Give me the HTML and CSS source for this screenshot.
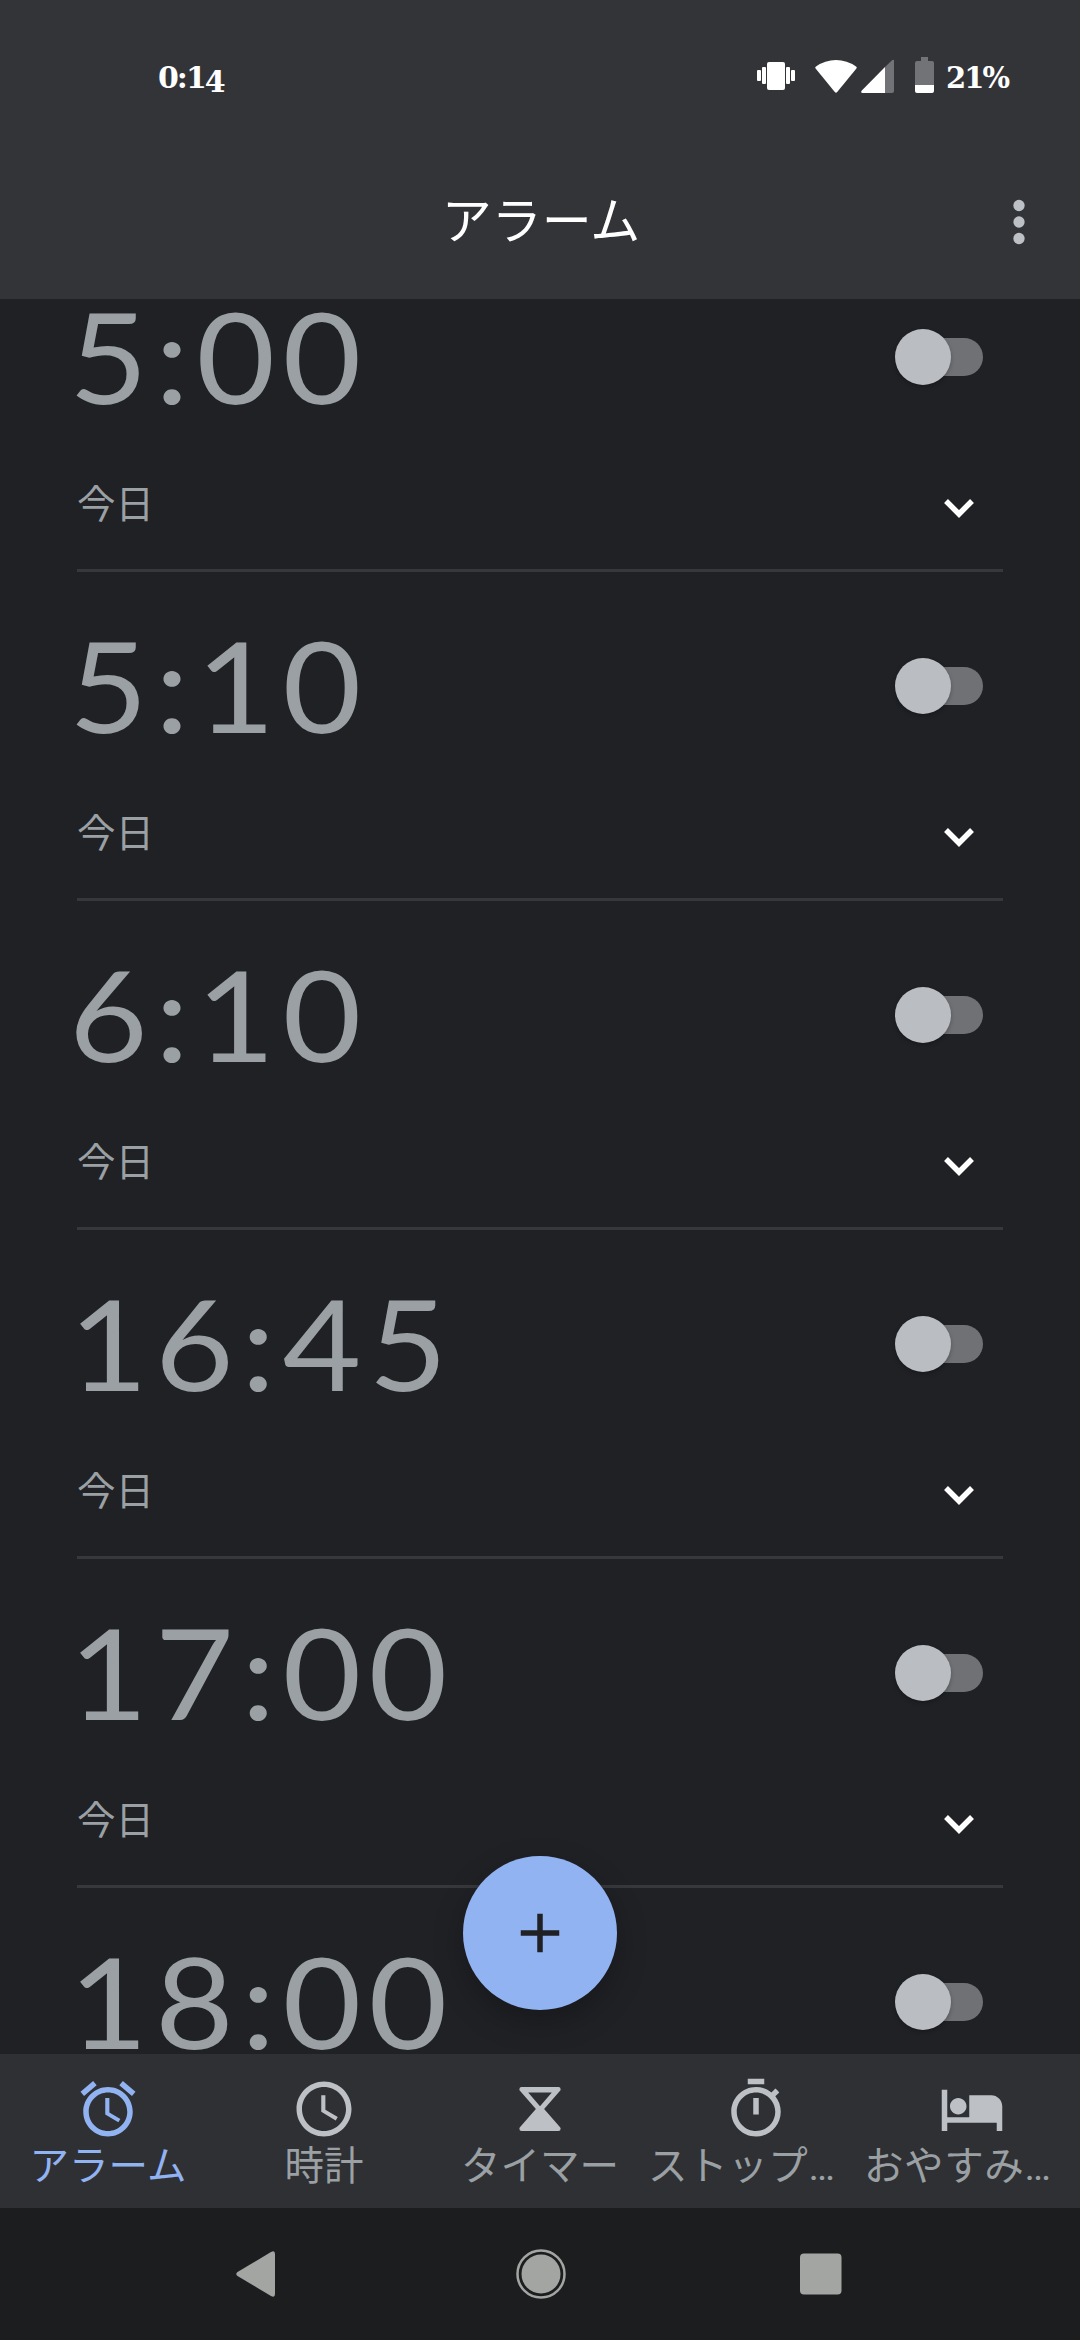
FILE: index.html
```html
<!DOCTYPE html>
<html lang="ja">
<head>
<meta charset="UTF-8">
<meta name="viewport" content="width=device-width, initial-scale=1.0">
<title>アラーム</title>
<link rel="stylesheet" href="styles.css">
</head>
<body>

<div class="screen">
    <header class="header">
        <div class="status-bar">
            <span class="status-time">0:1<span class="low">4</span></span>
            <div class="status-icons">
                <svg class="vibrate" width="38" height="40" viewBox="0 0 38 40">
                    <rect x="0" y="14" width="4" height="11" rx="1"/>
                    <rect x="5" y="11" width="4" height="17" rx="1"/>
                    <rect x="10" y="6" width="18" height="28" rx="2"/>
                    <rect x="29" y="11" width="4" height="17" rx="1"/>
                    <rect x="34" y="14" width="4" height="11" rx="1"/>
                </svg>
                <svg class="wifi" width="42" height="40" viewBox="0 0 42 40">
                    <path d="M.6 12.6Q-.2 11.4 1 10.5Q10 4 21 4T41 10.5Q42.200 11.4 41.400 12.6L22.200 36Q21 37.400 19.800 36Z"/>
                </svg>
                <svg class="signal" width="33" height="40" viewBox="0 0 33 40">
                    <path class="dim" d="M24 11L31 4.200Q33 3 33 5V35Q33 37 31 37H24Z"/>
                    <path d="M24 11V37H1.500Q-.6 37 .6 34.800Z"/>
                </svg>
                <svg class="battery" width="19" height="40" viewBox="0 0 19 40">
                    <path class="dim" d="M6 1H13V5H17Q19 5 19 7V29H0V7Q0 5 2 5H6Z"/>
                    <path d="M0 29H19V35Q19 37 17 37H2Q0 37 0 35Z"/>
                </svg>
                <span class="status-percent">21%</span>
            </div>
        </div>
        <div class="toolbar">
            <h1>アラーム</h1>
            <svg class="more" width="66" height="66" viewBox="0 0 24 24">
                <circle cx="12" cy="6" r="2.050"/>
                <circle cx="12" cy="12" r="2.050"/>
                <circle cx="12" cy="18" r="2.050"/>
            </svg>
        </div>
    </header>

    <main class="alarms">
        <div class="alarm-list">
            <div class="alarm">
                <div class="alarm-top"><span class="time">5:00</span><div class="switch"><div class="thumb"></div></div></div>
                <div class="alarm-bottom"><span class="day">今日</span><svg class="chevron" width="30" height="20" viewBox="0 0 30 20"><path d="M2 2L15 15L28 2"/></svg></div>
            </div>
            <div class="alarm">
                <div class="alarm-top"><span class="time">5:10</span><div class="switch"><div class="thumb"></div></div></div>
                <div class="alarm-bottom"><span class="day">今日</span><svg class="chevron" width="30" height="20" viewBox="0 0 30 20"><path d="M2 2L15 15L28 2"/></svg></div>
            </div>
            <div class="alarm">
                <div class="alarm-top"><span class="time">6:10</span><div class="switch"><div class="thumb"></div></div></div>
                <div class="alarm-bottom"><span class="day">今日</span><svg class="chevron" width="30" height="20" viewBox="0 0 30 20"><path d="M2 2L15 15L28 2"/></svg></div>
            </div>
            <div class="alarm">
                <div class="alarm-top"><span class="time">16:45</span><div class="switch"><div class="thumb"></div></div></div>
                <div class="alarm-bottom"><span class="day">今日</span><svg class="chevron" width="30" height="20" viewBox="0 0 30 20"><path d="M2 2L15 15L28 2"/></svg></div>
            </div>
            <div class="alarm">
                <div class="alarm-top"><span class="time">17:00</span><div class="switch"><div class="thumb"></div></div></div>
                <div class="alarm-bottom"><span class="day">今日</span><svg class="chevron" width="30" height="20" viewBox="0 0 30 20"><path d="M2 2L15 15L28 2"/></svg></div>
            </div>
            <div class="alarm">
                <div class="alarm-top"><span class="time">18:00</span><div class="switch"><div class="thumb"></div></div></div>
            </div>
        </div>
        <div class="fab">
            <svg width="66" height="66" viewBox="0 0 24 24"><path d="M19 13h-6v6h-2v-6H5v-2h6V5h2v6h6z"/></svg>
        </div>
    </main>

    <nav class="tabs">
        <div class="tab active">
            <svg viewBox="0 0 24 24"><path d="M22 5.720l-4.600-3.860-1.290 1.530 4.600 3.860L22 5.720zM7.880 3.390L6.600 1.860 2 5.710l1.290 1.530 4.590-3.850zM12.500 8H11v6l4.750 2.850.75-1.230-4-2.370V8zM12 4c-4.970 0-9 4.030-9 9s4.020 9 9 9c4.970 0 9-4.030 9-9s-4.030-9-9-9zm0 16c-3.870 0-7-3.130-7-7s3.130-7 7-7 7 3.130 7 7-3.130 7-7 7z"/></svg>
            <span>アラーム</span>
        </div>
        <div class="tab">
            <svg viewBox="0 0 24 24"><path d="M11.990 2C6.470 2 2 6.480 2 12s4.470 10 9.990 10C17.520 22 22 17.520 22 12S17.520 2 11.990 2zM12 20c-4.420 0-8-3.580-8-8s3.580-8 8-8 8 3.580 8 8-3.580 8-8 8zm.5-13H11v6l5.250 3.150.75-1.230-4.500-2.670z"/></svg>
            <span>時計</span>
        </div>
        <div class="tab">
            <svg viewBox="0 0 24 24"><path fill-rule="evenodd" d="M5.300 4H18.700Q19.500 4 19.500 4.800Q19.500 5.150 19.300 5.400L13.500 12L19.300 18.600Q19.500 18.850 19.500 19.200Q19.500 20 18.700 20H5.300Q4.500 20 4.500 19.200Q4.500 18.850 4.700 18.600L10.500 12L4.700 5.400Q4.500 5.150 4.500 4.800Q4.500 4 5.300 4ZM7.700 6L12 11L16.300 6Z"/></svg>
            <span>タイマー</span>
        </div>
        <div class="tab">
            <svg viewBox="0 0 24 24"><path d="M15 1H9v2h6V1zm-4 13h2V8h-2v6zm8.030-6.610l1.420-1.420c-.43-.51-.9-.99-1.410-1.410l-1.420 1.420C16.070 4.740 14.120 4 12 4c-4.970 0-9 4.030-9 9s4.020 9 9 9 9-4.030 9-9c0-2.120-.74-4.070-1.970-5.610zM12 20c-3.870 0-7-3.130-7-7s3.130-7 7-7 7 3.130 7 7-3.130 7-7 7z"/></svg>
            <span class="cut">ストップ…</span>
        </div>
        <div class="tab">
            <svg viewBox="0 0 24 24"><path d="M7 14c1.660 0 3-1.340 3-3S8.660 8 7 8s-3 1.340-3 3 1.340 3 3 3zM19 7h-8v8H3V5H1v15h2v-3h18v3h2v-9c0-2.210-1.790-4-4-4z"/></svg>
            <span class="cut">おやすみ…</span>
        </div>
    </nav>

    <div class="system-nav">
        <svg width="40" height="52" viewBox="0 0 40 52"><path d="M1.500 24L35 4Q39 2 39 6V46Q39 50 35 48L1.500 28Q-1 26 1.500 24Z"/></svg>
        <svg class="home" width="52" height="52" viewBox="0 0 52 52"><circle cx="26" cy="26" r="19.500"/><circle class="ring" cx="26" cy="26" r="23.500"/></svg>
        <svg width="42" height="52" viewBox="0 0 42 52"><rect x="0" y="5.500" width="41.500" height="41" rx="4"/></svg>
    </div>
</div>

</body>
</html>
```
FILE: styles.css
```css
body {
    margin: 0;
    background-color: #202125;
    font-family: Roboto, "Noto Sans CJK JP", sans-serif;
}
svg {
    display: block;
    flex-shrink: 0;
}
.screen {
    width: 1080px;
    height: 2340px;
    display: flex;
    flex-direction: column;
    overflow: hidden;
}

/* header */
.header {
    height: 299px;
    flex-shrink: 0;
    background-color: #333438;
    color: #fff;
}
.status-bar {
    display: flex;
    justify-content: space-between;
    align-items: center;
    height: 40px;
    padding: 56px 72px 0 158px;
    font-family: "DejaVu Serif", serif;
    font-weight: bold;
    font-size: 29px;
    line-height: 40px;
}
.status-time {
    padding-top: 4px;
    font-size: 30px;
    letter-spacing: -2px;
}
.low {
    vertical-align: -4px;
    line-height: 1;
}
.status-icons {
    display: flex;
    align-items: center;
    fill: #fff;
}
.dim {
    fill: #727376;
}
.wifi {
    margin-left: 20px;
}
.signal {
    margin-left: 4px;
}
.battery {
    margin-left: 21px;
}
.status-percent {
    margin-left: 12px;
    padding-top: 3px;
    letter-spacing: -2px;
}
.toolbar {
    display: grid;
    grid-template-columns: 95px 1fr 93px;
    align-items: center;
    height: 132px;
    margin-top: 60px;
}
.toolbar h1 {
    grid-column: 2;
    margin: 0;
    text-align: center;
    font-size: 50px;
    font-weight: normal;
    line-height: 72px;
}
.more {
    margin-left: -1px;
    fill: #bdc1c6;
}

/* alarm list */
.alarms {
    position: relative;
    height: 1755px;
    flex-shrink: 0;
    overflow: hidden;
}
.alarm-list {
    margin: -56px 77px 0;
}
.alarm {
    box-sizing: border-box;
    height: 329px;
    padding-top: 62px;
    border-bottom: 3px solid #37383c;
}
.alarm:last-child {
    height: 167px;
    border-bottom: none;
}
.alarm-top {
    display: flex;
    justify-content: space-between;
    align-items: center;
    height: 104px;
    padding-right: 20px;
}
.time {
    margin-left: -8px;
    padding-bottom: 4px;
    font-family: Lato, sans-serif;
    font-size: 127px;
    line-height: 98px;
    letter-spacing: 6.8px;
    color: #9aa0a3;
    transform: scaleX(1.07);
    transform-origin: left;
}
.switch {
    display: flex;
    align-items: center;
    width: 78px;
    height: 38px;
    border-radius: 19px;
    background-color: #707174;
}
.thumb {
    width: 56px;
    height: 56px;
    margin-left: -10px;
    flex-shrink: 0;
    border-radius: 50%;
    background-color: #babec3;
    box-shadow: 0 2px 4px rgba(0, 0, 0, 0.25);
}
.alarm-bottom {
    display: flex;
    justify-content: space-between;
    align-items: center;
    height: 60px;
    margin-top: 64px;
    padding-right: 29px;
}
.day {
    padding-top: 3px;
    font-size: 38.5px;
    line-height: 60px;
    color: #9aa0a3;
}
.chevron {
    margin-top: 12px;
    fill: none;
    stroke: #fff;
    stroke-width: 5.5;
}
.fab {
    position: absolute;
    left: 463px;
    top: 1557px;
    display: flex;
    justify-content: center;
    align-items: center;
    width: 154px;
    height: 154px;
    border-radius: 50%;
    background-color: #92b3f2;
    box-shadow: 0 12px 30px rgba(0, 0, 0, 0.25);
    fill: #202125;
}

/* bottom tabs */
.tabs {
    display: grid;
    grid-template-columns: repeat(5, 216px);
    height: 154px;
    flex-shrink: 0;
    background-color: #2f3034;
    color: #9aa0a3;
    fill: #bdc1c6;
}
.tab {
    display: flex;
    flex-direction: column;
    align-items: center;
    padding-top: 22px;
    font-size: 39.5px;
}
.tab svg {
    width: 66px;
    height: 66px;
}
.tab span {
    line-height: 50px;
    white-space: nowrap;
}
.tab .cut {
    align-self: flex-start;
    letter-spacing: 0.6px;
}
.active {
    color: #92b3f2;
    fill: #92b3f2;
}

/* system buttons */
.system-nav {
    display: flex;
    justify-content: space-between;
    align-items: center;
    height: 132px;
    padding: 0 238px 0 236px;
    background-color: #1c1d1f;
    fill: #a3a5a3;
}
.home {
    margin-left: 5px;
}
.ring {
    fill: none;
    stroke: #a3a5a3;
    stroke-width: 2.5;
}
```
